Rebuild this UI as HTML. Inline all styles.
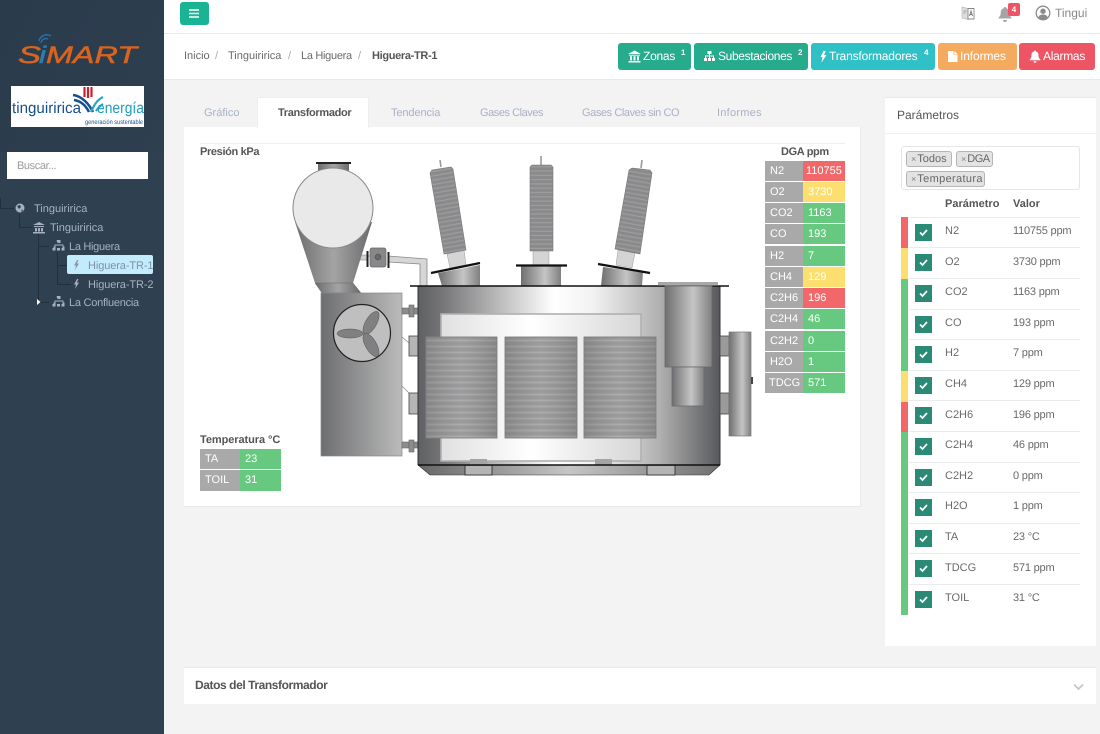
<!DOCTYPE html>
<html lang="es"><head><meta charset="utf-8"><title>SiMART</title>
<style>
*{box-sizing:border-box}
html,body{margin:0;padding:0;width:1100px;height:734px;overflow:hidden;background:#f3f3f4;font-family:"Liberation Sans",sans-serif;color:#676a6c;text-rendering:geometricPrecision}
.a{position:absolute}
.t{position:absolute;white-space:nowrap;font-size:11px;line-height:14px}
.b{font-weight:bold}
.btn{position:absolute;top:43px;height:27px;border-radius:3px;color:#fff;font-size:12px;line-height:27px;white-space:nowrap}
.btn svg{position:absolute;top:7px;fill:#fff}
.btn sup{position:absolute;top:-4px;font-size:8px;font-weight:bold}
.c{position:absolute;height:20px;line-height:21px;font-size:11px;color:#fff;padding-left:5px;white-space:nowrap}
.g{background:#a9a9a9}.gr{background:#66c97f}.r{background:#f2686a}.y{background:#fcdf6f}
.line{position:absolute;background:#222f3c}
.tree{position:absolute;white-space:nowrap;font-size:11px;line-height:14px;color:#a7b1c2}
.row{position:absolute;left:909px;width:171px;height:1px;background:#e9ebee}
.ck{position:absolute;left:915px;width:17px;height:17px;background:#2b8a75}
.ck svg{position:absolute;left:3px;top:3px}
.pn{position:absolute;left:945px;font-size:11px;line-height:14px;white-space:nowrap;color:#676a6c}
.pv{position:absolute;left:1013px;font-size:11px;line-height:14px;white-space:nowrap;letter-spacing:-.2px;color:#676a6c}
.tag{position:absolute;height:16px;background:#e3e3e3;border:1px solid #b5b5b5;border-radius:3px;font-size:11px;line-height:14px;padding-left:4px;white-space:nowrap;color:#666}
.tag i{font-style:normal;font-size:9px;color:#888;margin-right:1px}
</style></head><body>

<!-- sidebar -->
<div class="a" style="left:0;top:0;width:164px;height:734px;background:#2f4050"></div>
<div class="a" style="left:0;top:0;width:164px;height:152px;background:linear-gradient(120deg,#2a3b4c,#2e3f50)"></div>

<svg class="a" style="left:0;top:25px" width="164" height="45" viewBox="0 25 164 45">
<path d="M39 41a8 8 0 0 1 12-5M41 43a5 5 0 0 1 7-4" fill="none" stroke="#2a6fa5" stroke-width="1.500"/>
<g font-family="Liberation Sans,sans-serif" font-style="italic" font-size="24" fill="#d9641f" stroke="#d9641f" stroke-width=".5"><text x="18" y="63" textLength="23" lengthAdjust="spacingAndGlyphs">S</text><text x="39" y="63" fill="#2a7db5" stroke="#2a7db5" textLength="7" lengthAdjust="spacingAndGlyphs">i</text><text x="46" y="63" textLength="91" lengthAdjust="spacingAndGlyphs">MART</text></g>
</svg>

<div class="a" style="left:11px;top:86px;width:133px;height:41px;background:#fff;overflow:hidden">
<svg width="133" height="41" viewBox="11 86 133 41" class="a" style="left:0;top:0">
<path d="M84.500 87v10M88 87v11M91.500 87v10" stroke="#c8232c" stroke-width="2.200"/>
<path d="M73 95c9 1 16 9 20 17M74 100c7 1 12 6 15 12" fill="none" stroke="#174f8c" stroke-width="2.500"/>
<path d="M91 112c3-7 6-12 12-15M96 111c2-3 4-5 7-7" fill="none" stroke="#27a7c4" stroke-width="2.200"/>
<text x="12" y="113" font-size="15.500" fill="#174f8c" font-family="Liberation Sans,sans-serif" textLength="69" lengthAdjust="spacingAndGlyphs">tinguiririca</text>
<text x="97" y="113" font-size="15.500" fill="#1e9dbd" font-family="Liberation Sans,sans-serif" textLength="47" lengthAdjust="spacingAndGlyphs">energía</text>
<text x="85" y="124" font-size="6.500" fill="#174f8c" font-family="Liberation Sans,sans-serif" textLength="58" lengthAdjust="spacingAndGlyphs">generación sustentable</text>
</svg></div>

<div class="a" style="left:7px;top:152px;width:141px;height:27px;background:#fff"></div>
<div class="t" style="left:17px;top:159px;color:#9a9a9a;letter-spacing:-.4px">Buscar...</div>

<!-- tree -->
<div class="line" style="left:0;top:198px;width:1px;height:10px"></div>
<div class="line" style="left:0;top:208px;width:14px;height:1px"></div>
<div class="line" style="left:19px;top:214px;width:1px;height:13px"></div>
<div class="line" style="left:19px;top:227px;width:13px;height:1px"></div>
<div class="line" style="left:38px;top:233px;width:1px;height:69px"></div>
<div class="line" style="left:38px;top:246px;width:11px;height:1px"></div>
<div class="line" style="left:38px;top:302px;width:11px;height:1px"></div>
<div class="line" style="left:57px;top:252px;width:1px;height:32px"></div>
<div class="line" style="left:57px;top:265px;width:10px;height:1px"></div>
<div class="line" style="left:57px;top:284px;width:14px;height:1px"></div>
<div class="a" style="left:67px;top:255px;width:86px;height:19px;background:#c2ebfb;border-radius:2px"></div>

<svg class="a" style="left:0;top:195px" width="164" height="120" viewBox="0 195 164 120" fill="#a7b1c2">
<circle cx="20" cy="208" r="4.500"/><path d="M17 206l3-1 1 2-2 2zM22 209l1 2-2 1z" fill="#2f4050"/>
<path d="M33 225l6-3 6 3zM34 226h10v1h-10zM35 228h2v3.500h-2zM38 228h2v3.500h-2zM41 228h2v3.500h-2zM33 232h12v1.500h-12z"/>
<path d="M56 241h4v3h-1.500v1.500h4.500v2h1v1.500h-2v-2.500h-7v2.500h-2v-1.500h1v-2h4.500v-1.500h-1.500zM52 249h3v2.500h-3zM56.500 249h3v2.500h-3zM61 249h3v2.500h-3z" transform="translate(.5 -1)"/>
<path d="M77 260l-3 5.500h2l-1 4.500 4-6.500h-2.200l1.700-3.500z" fill="#8798a8"/>
<path d="M77 279l-3 5.500h2l-1 4.500 4-6.500h-2.200l1.700-3.500z"/>
<path d="M56 297h4v3h-1.500v1.500h4.500v2h1v1.500h-2v-2.500h-7v2.500h-2v-1.500h1v-2h4.500v-1.500h-1.500zM52 305h3v2.500h-3zM56.500 305h3v2.500h-3zM61 305h3v2.500h-3z" transform="translate(.5 -1)"/>
<path d="M37 299l3.500 3-3.500 3z" fill="#fff"/>
</svg>
<div class="tree" style="left:34px;top:202px">Tinguiririca</div>
<div class="tree" style="left:50px;top:221px">Tinguiririca</div>
<div class="tree" style="left:69px;top:240px;letter-spacing:-.3px">La Higuera</div>
<div class="tree" style="left:88px;top:259px;color:#7f92a3;letter-spacing:-.1px">Higuera-TR-1</div>
<div class="tree" style="left:88px;top:278px;letter-spacing:-.1px">Higuera-TR-2</div>
<div class="tree" style="left:69px;top:296px;letter-spacing:-.25px">La Confluencia</div>

<!-- top bar -->
<div class="a" style="left:164px;top:0;width:936px;height:34px;background:#fff;border-bottom:1px solid #e7eaec"></div>
<div class="a" style="left:180px;top:2px;width:29px;height:23px;background:#1ab394;border-radius:3px"></div>
<svg class="a" style="left:189px;top:9px" width="11" height="9"><path d="M0 1h10M0 4.500h10M0 8h10" stroke="#fff" stroke-width="1.600"/></svg>
<svg class="a" style="left:960px;top:5px" width="16" height="17" viewBox="0 0 16 17">
<path d="M2 2l6 1.500v11l-6-1.500z" fill="#ddd" stroke="#bbb" stroke-width=".7"/><path d="M8 3.500h6v10.500h-6z" fill="#fff" stroke="#888" stroke-width=".9"/><path d="M9.500 11l1.500-5 1.500 5M10 9.500h2" fill="none" stroke="#777" stroke-width=".9"/><path d="M3.500 6h3M3.500 8h2" stroke="#999"/>
</svg>
<svg class="a" style="left:997px;top:6px" width="17" height="16" viewBox="0 0 17 16"><path d="M8 1a1.300 1.300 0 0 1 1.300 1.200c2.300.6 3 2.500 3 4.800 0 2.500 1 3.500 2.200 4.700v.8h-13v-.8c1.200-1.200 2.200-2.200 2.200-4.700 0-2.300.7-4.200 3-4.800A1.300 1.300 0 0 1 8 1zM6 14h4a2 2 0 0 1-4 0z" fill="#a3a5a7"/></svg>
<div class="a" style="left:1008px;top:3px;width:12px;height:13px;background:#ed5565;border-radius:2px;color:#fff;font-size:8px;font-weight:bold;line-height:13px;text-align:center">4</div>
<svg class="a" style="left:1035px;top:5px" width="16" height="16" viewBox="0 0 16 16"><circle cx="8" cy="8" r="6.800" fill="none" stroke="#8a8c8e" stroke-width="1.300"/><circle cx="8" cy="6.200" r="2.700" fill="#8a8c8e"/><path d="M3.200 12.500c1-2.300 2.700-3 4.800-3s3.800.7 4.800 3a6.800 6.800 0 0 1-9.600 0z" fill="#8a8c8e"/></svg>
<div class="t" style="left:1055px;top:6px;font-size:12px;color:#888">Tingui</div>

<!-- breadcrumb -->
<div class="a" style="left:164px;top:34px;width:936px;height:46px;background:#fff;border-bottom:1px solid #e7eaec"></div>
<div class="t" style="left:184px;top:49px">Inicio</div>
<div class="t" style="left:215px;top:49px;color:#aaa">/</div>
<div class="t" style="left:228px;top:49px">Tinguiririca</div>
<div class="t" style="left:288px;top:49px;color:#aaa">/</div>
<div class="t" style="left:301px;top:49px;letter-spacing:-.3px">La Higuera</div>
<div class="t" style="left:358px;top:49px;color:#aaa">/</div>
<div class="t b" style="left:372px;top:49px;color:#555;letter-spacing:-.33px">Higuera-TR-1</div>

<div class="btn" style="left:618px;width:73px;background:#27ab8d"><svg style="left:10px" width="13" height="13" viewBox="0 0 13 13"><path d="M0 4l6.500-3.500L13 4zM1 4.800h11v.8H1zM2 6.200h2v4.300H2zM5.500 6.200h2v4.300h-2zM9 6.200h2v4.300H9zM.5 11h12v1.500H.5z"/></svg><span style="position:absolute;left:25px;letter-spacing:-.25px">Zonas</span><sup style="left:63px">1</sup></div>
<div class="btn" style="left:694px;width:114px;background:#27ab8d"><svg style="left:9px" width="13" height="13" viewBox="0 0 13 13"><path d="M4.500 1h4v3H7v1.500h4V8h1v3H9V8h1V6.500H7V8h1v3H5V8h1V6.500H3V8h1v3H1V8h1V5.500h4V4H4.500z"/></svg><span style="position:absolute;left:24px;letter-spacing:-.36px">Subestaciones</span><sup style="left:104px">2</sup></div>
<div class="btn" style="left:811px;width:124px;background:#30c1c6"><svg style="left:9px" width="7" height="13" viewBox="0 0 7 13"><path d="M3.500 1L.5 7h2l-1 5.500L6.500 5H4L5.800 1z"/></svg><span style="position:absolute;left:18px;letter-spacing:-.16px">Transformadores</span><sup style="left:113px">4</sup></div>
<div class="btn" style="left:938px;width:79px;background:#f5ab5f"><svg style="left:10px" width="10" height="13" viewBox="0 0 10 13"><path d="M0 1h5.500v3.500H9.500V12H0zM6.300 1l3.200 3H6.300z"/></svg><span style="position:absolute;left:22px;letter-spacing:-.1px">Informes</span></div>
<div class="btn" style="left:1019px;width:76px;background:#ed5565"><svg style="left:10px" width="12" height="13" viewBox="0 0 12 13"><path d="M6 .5a1 1 0 0 1 1 1c2 .5 2.500 2 2.500 4 0 2.200.8 3 1.800 4v.8H.7v-.8c1-1 1.800-1.800 1.800-4 0-2 .5-3.500 2.500-4a1 1 0 0 1 1-1zM4.500 11.300h3a1.500 1.500 0 0 1-3 0z"/></svg><span style="position:absolute;left:24px;letter-spacing:-.28px">Alarmas</span></div>

<!-- tabs -->
<div class="a" style="left:184px;top:127px;width:677px;height:380px;background:#fff;border-bottom:1px solid #e7eaec;border-right:1px solid #e7eaec"></div>
<div class="a" style="left:257px;top:97px;width:112px;height:31px;background:#fff;border:1px solid #eceef0;border-bottom:0"></div>
<div class="t" style="left:204px;top:106px;color:#a7b1c2">Gráfico</div>
<div class="t b" style="left:278px;top:106px;color:#555;letter-spacing:-.33px">Transformador</div>
<div class="t" style="left:391px;top:106px;color:#a7b1c2;letter-spacing:-.1px">Tendencia</div>
<div class="t" style="left:480px;top:106px;color:#a7b1c2;letter-spacing:-.45px">Gases Claves</div>
<div class="t" style="left:582px;top:106px;color:#a7b1c2;letter-spacing:-.42px">Gases Claves sin CO</div>
<div class="t" style="left:717px;top:106px;color:#a7b1c2;letter-spacing:.25px">Informes</div>

<div class="a" style="left:200px;top:143px;width:645px;height:1px;background:#f0f0f0"></div>
<div class="t b" style="left:200px;top:145px;color:#555;letter-spacing:-.35px">Presión kPa</div>
<div class="t b" style="left:781px;top:145px;color:#555;letter-spacing:-.35px">DGA ppm</div>
<div class="t b" style="left:200px;top:433px;color:#555;letter-spacing:-.07px">Temperatura °C</div>

<!-- transformer -->
<svg class="a" style="left:280px;top:150px" width="480" height="330" viewBox="280 150 480 330">
<defs>
<linearGradient id="tank" x1="0" x2="1" y1="0" y2="0"><stop offset="0" stop-color="#5f6063"/><stop offset=".08" stop-color="#757577"/><stop offset=".45" stop-color="#fff"/><stop offset=".58" stop-color="#f2f2f2"/><stop offset=".8" stop-color="#b0b0b0"/><stop offset="1" stop-color="#58595c"/></linearGradient>
<linearGradient id="base" x1="0" x2="1" y1="0" y2="0"><stop offset="0" stop-color="#666"/><stop offset=".5" stop-color="#c6c6c6"/><stop offset="1" stop-color="#707072"/></linearGradient>
<linearGradient id="metal" x1="0" x2="1" y1="0" y2="0"><stop offset="0" stop-color="#6d6e70"/><stop offset="1" stop-color="#bbb"/></linearGradient>
<linearGradient id="metal2" x1="0" x2="1" y1="0" y2="0"><stop offset="0" stop-color="#6f6f71"/><stop offset=".6" stop-color="#c5c5c5"/><stop offset="1" stop-color="#808082"/></linearGradient>
<linearGradient id="cone" x1="0" x2="1" y1="0" y2="0"><stop offset="0" stop-color="#6c6c6e"/><stop offset=".5" stop-color="#a4a4a4"/><stop offset="1" stop-color="#6a6a6c"/></linearGradient>
<linearGradient id="win" x1="0" x2="1" y1="0" y2="0"><stop offset="0" stop-color="#e0e0e0"/><stop offset=".45" stop-color="#fff"/><stop offset="1" stop-color="#d6d6d6"/></linearGradient>
<linearGradient id="shade" x1="0" x2="1" y1="0" y2="0"><stop offset="0" stop-color="#777" stop-opacity=".45"/><stop offset=".5" stop-color="#bbb" stop-opacity=".3"/><stop offset="1" stop-color="#777" stop-opacity=".45"/></linearGradient>
<pattern id="coil" width="6" height="6" patternUnits="userSpaceOnUse"><rect width="6" height="6" fill="#8e8e90"/><rect y="3.500" width="6" height="2" fill="#a6a6a6"/></pattern>
<pattern id="bush" width="6" height="4.300" patternUnits="userSpaceOnUse"><rect width="6" height="4.300" fill="#8a8a8c"/><rect y="2.700" width="6" height="1.200" fill="#9e9e9e"/></pattern>
<pattern id="bushL" width="6" height="4.300" patternUnits="userSpaceOnUse" patternTransform="rotate(-10)"><rect width="6" height="4.300" fill="#8a8a8c"/><rect y="2.700" width="6" height="1.200" fill="#9e9e9e"/></pattern>
<pattern id="bushR" width="6" height="4.300" patternUnits="userSpaceOnUse" patternTransform="rotate(10)"><rect width="6" height="4.300" fill="#8a8a8c"/><rect y="2.700" width="6" height="1.200" fill="#9e9e9e"/></pattern>
</defs>

<!-- pipe -->
<path d="M358 256h16M388 256l39 3v27h-7v-22l-32-2z" fill="#d6d6d6" stroke="#888" stroke-width=".8"/>
<rect x="358" y="255" width="10" height="5" fill="#d0d0d0" stroke="#888" stroke-width=".6"/>
<rect x="370" y="248" width="16" height="19" rx="2" fill="#88888a" stroke="#666" stroke-width=".7"/>
<circle cx="378" cy="257" r="3" fill="#69696b" stroke="#444" stroke-width=".5"/>
<path d="M367.500 251v16M388.500 252v16" stroke="#222" stroke-width="2"/>

<!-- conservator -->
<path d="M295 222L315 283H353L372 222z" fill="url(#cone)"/>
<path d="M315 283h38l8 10h-39z" fill="url(#cone)" stroke="#666" stroke-width=".5"/>
<rect x="318" y="164" width="31" height="8" fill="url(#cone)"/>
<path d="M316 163h35" stroke="#222" stroke-width="2"/>
<circle cx="333" cy="208" r="40" fill="#e9e9e9" stroke="#888" stroke-width="1"/>

<!-- radiator -->
<rect x="321" y="293" width="81" height="163" fill="url(#metal)" stroke="#888" stroke-width=".7"/>
<circle cx="362" cy="333" r="28.500" fill="#bfbfbf" stroke="#222" stroke-width="1.200"/>
<g fill="#808082" stroke="#555" stroke-width=".5">
<ellipse cx="350" cy="333.500" rx="13" ry="4.500"/>
<ellipse cx="371" cy="323" rx="5.500" ry="13" transform="rotate(30 371 323)"/>
<ellipse cx="371" cy="345" rx="5.500" ry="13" transform="rotate(-30 371 345)"/>
</g>
<!-- connectors -->
<g fill="#8c8c8e" stroke="#666" stroke-width=".6">
<rect x="402" y="308" width="7" height="6"/><rect x="409" y="305" width="5" height="12"/><rect x="414" y="308" width="4" height="6"/>
<rect x="402" y="442" width="7" height="6"/><rect x="409" y="440" width="5" height="12"/><rect x="414" y="442" width="4" height="6"/>
</g>
<path d="M402 337l7 6M402 386l7 7" stroke="#888" stroke-width=".7"/>
<rect x="409" y="336" width="9" height="20" fill="#b5b5b5" stroke="#444" stroke-width=".8"/>
<rect x="409" y="393" width="9" height="21" fill="#b5b5b5" stroke="#444" stroke-width=".8"/>

<!-- bushings -->
<g>
<path d="M442 286l-4-13 42-8 0 21z" fill="url(#metal2)"/>
<path d="M447 254l17-4 2 15-16 3z" fill="#d4d4d4" stroke="#888" stroke-width=".4"/>
<path d="M430 173l2-3 19-3 2 2 13 81-22 4z" fill="url(#bushL)" stroke="#777" stroke-width=".6"/>
<path d="M441 167l-1-7" stroke="#999" stroke-width="1.600"/>
<path d="M431 273l49-10" stroke="#111" stroke-width="2.200"/>
</g>
<g>
<rect x="521" y="266" width="40" height="20" fill="url(#metal2)"/>
<rect x="533" y="250" width="16" height="15" fill="#d4d4d4" stroke="#888" stroke-width=".4"/>
<path d="M530 167l2-2h19l2 2v84h-23z" fill="url(#bush)" stroke="#777" stroke-width=".6"/>
<path d="M541 165v-9" stroke="#999" stroke-width="1.600"/>
<path d="M516 265.500h51" stroke="#111" stroke-width="2.200"/>
</g>
<g>
<path d="M601 286l2-19 40 5-1 14z" fill="url(#metal2)"/>
<path d="M618 250l17 3-3 15-16-3z" fill="#d4d4d4" stroke="#888" stroke-width=".4"/>
<path d="M629 170l3-2 18 2 2 3-12 81-25-5z" fill="url(#bushR)" stroke="#777" stroke-width=".6"/>
<path d="M641 168l1-8" stroke="#999" stroke-width="1.600"/>
<path d="M598 264l52 9" stroke="#111" stroke-width="2.200"/>
</g>

<!-- tank -->
<rect x="418" y="286" width="302" height="179" fill="url(#tank)"/>
<path d="M418 286v179M720 286v179" stroke="#333" stroke-width="1"/>
<rect x="441" y="314" width="200" height="147" fill="url(#win)" stroke="#b0b0b0" stroke-width="1.600"/>
<g stroke="#808080" stroke-width=".7">
<rect x="426" y="337" width="71" height="101" fill="url(#coil)"/><rect x="426" y="337" width="71" height="101" fill="url(#shade)"/>
<rect x="505" y="337" width="72" height="101" fill="url(#coil)"/><rect x="505" y="337" width="72" height="101" fill="url(#shade)"/>
<rect x="584" y="337" width="72" height="101" fill="url(#coil)"/><rect x="584" y="337" width="72" height="101" fill="url(#shade)"/>
</g>
<path d="M410 286h319" stroke="#111" stroke-width="1.600"/>
<!-- right device -->
<rect x="665" y="286" width="47" height="81" fill="url(#metal2)" stroke="#666" stroke-width=".7"/>
<rect x="672" y="367" width="32" height="39" fill="url(#metal2)" stroke="#666" stroke-width=".7"/>
<rect x="658" y="282" width="60" height="3.500" fill="#a8a8a8"/>
<rect x="720" y="336" width="9" height="20" fill="#9a9a9a" stroke="#444" stroke-width=".8"/>
<rect x="720" y="393" width="9" height="21" fill="#9a9a9a" stroke="#444" stroke-width=".8"/>
<rect x="729" y="332" width="22" height="104" fill="url(#metal2)" stroke="#777" stroke-width=".7"/>
<rect x="751" y="377" width="2" height="7" fill="#444"/>
<!-- base -->
<rect x="470" y="459" width="17" height="6" fill="#a4a4a4"/><rect x="595" y="459" width="17" height="6" fill="#a4a4a4"/>
<path d="M418 465h302l-11 10H430z" fill="url(#base)" stroke="#333" stroke-width=".6"/>
<path d="M418 465h302" stroke="#111" stroke-width="1.400"/>
<rect x="465" y="465.500" width="27" height="9.500" fill="#b4b4b4" stroke="#222" stroke-width=".8"/>
<rect x="647" y="465.500" width="28" height="9.500" fill="#b4b4b4" stroke="#222" stroke-width=".8"/>
</svg>

<!-- DGA table -->
<div class="c g" style="left:765px;top:161px;width:38px">N2</div><div class="c r" style="left:803px;top:161px;width:42px;padding-left:3px">110755</div>
<div class="c g" style="left:765px;top:182px;width:38px">O2</div><div class="c y" style="left:803px;top:182px;width:42px">3730</div>
<div class="c g" style="left:765px;top:203px;width:38px">CO2</div><div class="c gr" style="left:803px;top:203px;width:42px">1163</div>
<div class="c g" style="left:765px;top:224px;width:38px">CO</div><div class="c gr" style="left:803px;top:224px;width:42px">193</div>
<div class="c g" style="left:765px;top:246px;width:38px">H2</div><div class="c gr" style="left:803px;top:246px;width:42px">7</div>
<div class="c g" style="left:765px;top:267px;width:38px">CH4</div><div class="c y" style="left:803px;top:267px;width:42px">129</div>
<div class="c g" style="left:765px;top:288px;width:38px">C2H6</div><div class="c r" style="left:803px;top:288px;width:42px">196</div>
<div class="c g" style="left:765px;top:309px;width:38px">C2H4</div><div class="c gr" style="left:803px;top:309px;width:42px">46</div>
<div class="c g" style="left:765px;top:331px;width:38px">C2H2</div><div class="c gr" style="left:803px;top:331px;width:42px">0</div>
<div class="c g" style="left:765px;top:352px;width:38px">H2O</div><div class="c gr" style="left:803px;top:352px;width:42px">1</div>
<div class="c g" style="left:765px;top:373px;width:38px;padding-left:4px">TDCG</div><div class="c gr" style="left:803px;top:373px;width:42px">571</div>

<!-- Temp table -->
<div class="c g" style="left:200px;top:449px;width:40px">TA</div><div class="c gr" style="left:240px;top:449px;width:41px">23</div>
<div class="c g" style="left:200px;top:470px;width:40px;height:21px">TOIL</div><div class="c gr" style="left:240px;top:470px;width:41px;height:21px">31</div>

<!-- Params panel -->
<div class="a" style="left:885px;top:97px;width:211px;height:549px;background:#fff;border-top:1px solid #e7eaec"></div>
<div class="a" style="left:885px;top:133px;width:211px;height:1px;background:#eceef0"></div>
<div class="t" style="left:897px;top:108px;font-size:12px;color:#555">Parámetros</div>
<div class="a" style="left:901px;top:146px;width:179px;height:44px;border:1px solid #e5e6e7;border-radius:3px"></div>
<div class="tag" style="left:906px;top:151px;width:46px"><i>×</i>Todos</div>
<div class="tag" style="left:956px;top:151px;width:37px"><i>×</i><span style="letter-spacing:-.5px">DGA</span></div>
<div class="tag" style="left:906px;top:171px;width:79px"><i>×</i><span style="letter-spacing:.35px">Temperatura</span></div>
<div class="t b" style="left:945px;top:197px;color:#555">Parámetro</div>
<div class="t b" style="left:1013px;top:197px;color:#555">Valor</div>

<div class="a" style="left:901px;top:217px;width:7px;height:31px;background:#f2686a"></div>
<div class="a" style="left:901px;top:248px;width:7px;height:31px;background:#fcdf6f"></div>
<div class="a" style="left:901px;top:279px;width:7px;height:92px;background:#66c97f"></div>
<div class="a" style="left:901px;top:371px;width:7px;height:31px;background:#fcdf6f"></div>
<div class="a" style="left:901px;top:402px;width:7px;height:30px;background:#f2686a"></div>
<div class="a" style="left:901px;top:432px;width:7px;height:183px;background:#66c97f"></div>

<div class="row" style="top:217px"></div><div class="row" style="top:247px"></div><div class="row" style="top:278px"></div><div class="row" style="top:309px"></div><div class="row" style="top:339px"></div><div class="row" style="top:370px"></div><div class="row" style="top:400px"></div><div class="row" style="top:431px"></div><div class="row" style="top:462px"></div><div class="row" style="top:492px"></div><div class="row" style="top:523px"></div><div class="row" style="top:553px"></div><div class="row" style="top:584px"></div>

<div class="ck" style="top:224px"><svg width="11" height="11"><path d="M2 5.500l2.500 2.500L9 3" fill="none" stroke="#fff" stroke-width="1.700"/></svg></div>
<div class="ck" style="top:254px"><svg width="11" height="11"><path d="M2 5.500l2.500 2.500L9 3" fill="none" stroke="#fff" stroke-width="1.700"/></svg></div>
<div class="ck" style="top:285px"><svg width="11" height="11"><path d="M2 5.500l2.500 2.500L9 3" fill="none" stroke="#fff" stroke-width="1.700"/></svg></div>
<div class="ck" style="top:316px"><svg width="11" height="11"><path d="M2 5.500l2.500 2.500L9 3" fill="none" stroke="#fff" stroke-width="1.700"/></svg></div>
<div class="ck" style="top:346px"><svg width="11" height="11"><path d="M2 5.500l2.500 2.500L9 3" fill="none" stroke="#fff" stroke-width="1.700"/></svg></div>
<div class="ck" style="top:377px"><svg width="11" height="11"><path d="M2 5.500l2.500 2.500L9 3" fill="none" stroke="#fff" stroke-width="1.700"/></svg></div>
<div class="ck" style="top:407px"><svg width="11" height="11"><path d="M2 5.500l2.500 2.500L9 3" fill="none" stroke="#fff" stroke-width="1.700"/></svg></div>
<div class="ck" style="top:438px"><svg width="11" height="11"><path d="M2 5.500l2.500 2.500L9 3" fill="none" stroke="#fff" stroke-width="1.700"/></svg></div>
<div class="ck" style="top:469px"><svg width="11" height="11"><path d="M2 5.500l2.500 2.500L9 3" fill="none" stroke="#fff" stroke-width="1.700"/></svg></div>
<div class="ck" style="top:499px"><svg width="11" height="11"><path d="M2 5.500l2.500 2.500L9 3" fill="none" stroke="#fff" stroke-width="1.700"/></svg></div>
<div class="ck" style="top:530px"><svg width="11" height="11"><path d="M2 5.500l2.500 2.500L9 3" fill="none" stroke="#fff" stroke-width="1.700"/></svg></div>
<div class="ck" style="top:560px"><svg width="11" height="11"><path d="M2 5.500l2.500 2.500L9 3" fill="none" stroke="#fff" stroke-width="1.700"/></svg></div>
<div class="ck" style="top:591px"><svg width="11" height="11"><path d="M2 5.500l2.500 2.500L9 3" fill="none" stroke="#fff" stroke-width="1.700"/></svg></div>

<div class="pn" style="top:224px">N2</div><div class="pv" style="top:224px">110755 ppm</div>
<div class="pn" style="top:255px">O2</div><div class="pv" style="top:255px">3730 ppm</div>
<div class="pn" style="top:285px">CO2</div><div class="pv" style="top:285px">1163 ppm</div>
<div class="pn" style="top:316px">CO</div><div class="pv" style="top:316px">193 ppm</div>
<div class="pn" style="top:346px">H2</div><div class="pv" style="top:346px">7 ppm</div>
<div class="pn" style="top:377px">CH4</div><div class="pv" style="top:377px">129 ppm</div>
<div class="pn" style="top:408px">C2H6</div><div class="pv" style="top:408px">196 ppm</div>
<div class="pn" style="top:438px">C2H4</div><div class="pv" style="top:438px">46 ppm</div>
<div class="pn" style="top:469px">C2H2</div><div class="pv" style="top:469px">0 ppm</div>
<div class="pn" style="top:499px">H2O</div><div class="pv" style="top:499px">1 ppm</div>
<div class="pn" style="top:530px">TA</div><div class="pv" style="top:530px">23 °C</div>
<div class="pn" style="top:561px">TDCG</div><div class="pv" style="top:561px">571 ppm</div>
<div class="pn" style="top:591px">TOIL</div><div class="pv" style="top:591px">31 °C</div>

<!-- bottom panel -->
<div class="a" style="left:184px;top:667px;width:912px;height:37px;background:#fff;border-top:1px solid #e7eaec"></div>
<div class="t b" style="left:195px;top:678px;font-size:12px;color:#555;letter-spacing:-.42px">Datos del Transformador</div>
<svg class="a" style="left:1073px;top:683px" width="11" height="8"><path d="M1 1.500l4.500 4.500L10 1.500" fill="none" stroke="#c4c6c8" stroke-width="1.800"/></svg>
</body></html>
